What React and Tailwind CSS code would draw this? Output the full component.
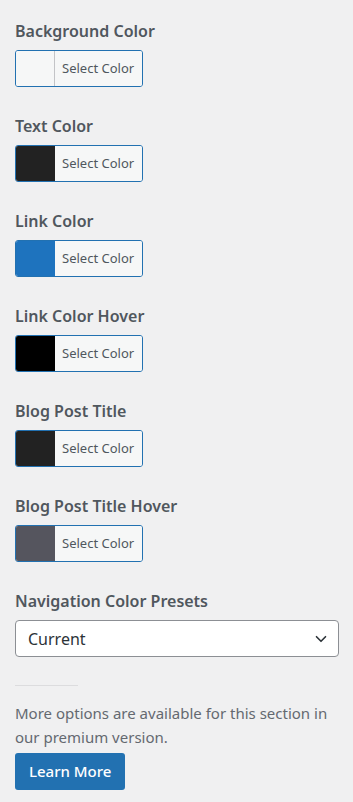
import { ChevronDown } from "lucide-react";

const colors = [
    { label: "Background Color", swatch: "bg-[#f6f7f7]", divider: true },
    { label: "Text Color", swatch: "bg-[#222222]" },
    { label: "Link Color", swatch: "bg-[#1e73be]" },
    { label: "Link Color Hover", swatch: "bg-[#000000]" },
    { label: "Blog Post Title", swatch: "bg-[#222222]" },
    { label: "Blog Post Title Hover", swatch: "bg-[#55555e]" },
];

function ColorControl({ label, swatch, divider }) {
    return (
        <div className="mb-[27px]">
            <div className="text-[16px] leading-[24px] font-semibold text-[#50575e] mb-[7px]">{label}</div>
            <div className="flex w-[128px] h-[37px] border border-[#2271b1] rounded-[3px] overflow-hidden">
                <div className={`w-[39px] shrink-0 ${swatch} ${divider ? "border-r border-[#c3c4c7]" : ""}`}></div>
                <div className="flex-1 bg-[#f6f7f7] flex items-center pl-[7px] pt-[1px] text-[13px] text-[#50575e]">Select Color</div>
            </div>
        </div>
    );
}

export default function App() {
    return (
        <div className="min-h-screen w-[353px] bg-[#f0f0f1] pl-[15px] pr-[14px] pt-[19px] font-['Noto_Sans',sans-serif]">
            {colors.map((c) => (
                <ColorControl key={c.label} {...c} />
            ))}

            <div className="text-[16px] leading-[24px] font-semibold text-[#50575e] mb-[7px]">Navigation Color Presets</div>
            <div className="flex items-center justify-between h-[37px] bg-white border border-[#8c8f94] rounded-[4px] pl-[12px] pr-[8px] text-[16px] text-[#2c3338]">
                <span>Current</span>
                <ChevronDown size={18} strokeWidth={2.2} className="text-[#2c3338]" />
            </div>

            <div className="w-[63px] h-px bg-[#dcdcde] mt-[28px] mb-[15px]"></div>
            <p className="text-[15px] leading-[24px] text-[#646970] pr-[4px]">
                More options are available for this section in our premium version.
            </p>
            <button className="mt-[4px] h-[37px] px-[14px] bg-[#2271b1] text-white text-[15px] font-medium rounded-[3px]">
                Learn More
            </button>
        </div>
    );
}
